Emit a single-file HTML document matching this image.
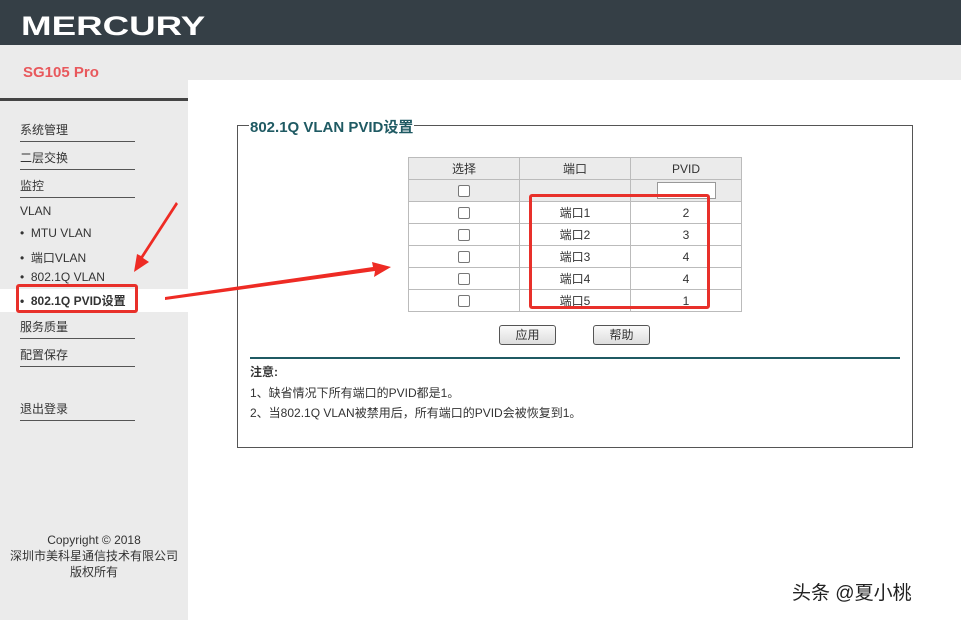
<!DOCTYPE html>
<html><head><meta charset="utf-8"><style>
*{margin:0;padding:0;box-sizing:border-box}
body{width:961px;height:620px;position:relative;overflow:hidden;background:#ebebeb;font-family:"Liberation Sans","Noto Sans CJK SC",sans-serif;font-size:12px;color:#333}
.abs{position:absolute}
#hdr{left:0;top:0;width:961px;height:45px;background:#353f46}
#logo{left:21px;top:11px;color:#fff;font-weight:bold;font-size:27px;letter-spacing:0px;transform:scaleX(1.36);transform-origin:left}
#main{left:188px;top:80px;width:773px;height:540px;background:#fff}
.nav{left:20px;width:115px;border-bottom:1px solid #555;height:22px;line-height:20px;font-size:12px;color:#333}
.sub{left:20px;font-size:12px;color:#333}
table{border-collapse:collapse;position:absolute;left:408px;top:157px}
td{border:1px solid #bbb;width:111px;height:22px;text-align:center;font-size:12px;color:#333}
.g td{background:#ebebeb}
.cb{display:inline-block;width:12px;height:12px;border:1px solid #777;border-radius:2px;background:#fff;vertical-align:middle}
.btn{top:325px;width:57px;height:20px;border:1px solid #555;border-radius:3px;background:linear-gradient(#fafafa,#ddd);text-align:center;line-height:18px;font-size:12px}
</style></head><body>
<div id="hdr" class="abs"></div>
<div id="logo" class="abs">MERCURY</div>
<div class="abs" style="left:23px;top:64px;color:#e8585c;font-weight:bold;font-size:15px">SG105 Pro</div>
<div class="abs" style="left:0;top:98px;width:188px;height:3px;background:#444"></div>
<div id="main" class="abs"></div>
<div class="nav abs" style="top:120px">系统管理</div>
<div class="nav abs" style="top:148px">二层交换</div>
<div class="nav abs" style="top:176px">监控</div>
<div class="sub abs" style="top:204px">VLAN</div>
<div class="sub abs" style="top:226px">•&nbsp; MTU VLAN</div>
<div class="sub abs" style="top:249px">•&nbsp; 端口VLAN</div>
<div class="sub abs" style="top:270px">•&nbsp; 802.1Q VLAN</div>
<div class="abs" style="left:0;top:289px;width:188px;height:23px;background:#fff"></div>
<div class="sub abs" style="top:292px;font-weight:bold">•&nbsp; 802.1Q PVID设置</div>
<div class="nav abs" style="top:317px">服务质量</div>
<div class="nav abs" style="top:345px">配置保存</div>
<div class="nav abs" style="top:399px">退出登录</div>
<div class="abs" style="left:0;top:532px;width:188px;text-align:center;line-height:16px">Copyright © 2018<br>深圳市美科星通信技术有限公司<br>版权所有</div>
<div class="abs" style="left:237px;top:125px;width:676px;height:323px;border:1px solid #555"></div>
<div class="abs" style="left:249px;top:116px;background:#fff;padding:0 1px;color:#1f5a63;font-weight:bold;font-size:15px">802.1Q VLAN PVID设置</div>
<table>
<tr class="g"><td>选择</td><td>端口</td><td>PVID</td></tr>
<tr class="g"><td><span class="cb"></span></td><td></td><td><span style="display:inline-block;width:59px;height:17px;border:1px solid #999;background:#fff;vertical-align:middle"></span></td></tr>
<tr><td><span class="cb"></span></td><td>端口1</td><td>2</td></tr>
<tr><td><span class="cb"></span></td><td>端口2</td><td>3</td></tr>
<tr><td><span class="cb"></span></td><td>端口3</td><td>4</td></tr>
<tr><td><span class="cb"></span></td><td>端口4</td><td>4</td></tr>
<tr><td><span class="cb"></span></td><td>端口5</td><td>1</td></tr>
</table>
<div class="btn abs" style="left:499px">应用</div>
<div class="btn abs" style="left:593px">帮助</div>
<div class="abs" style="left:250px;top:357px;width:650px;height:2px;background:#1f5a63"></div>
<div class="abs" style="left:250px;top:363px;font-weight:bold">注意:</div>
<div class="abs" style="left:250px;top:384px">1、缺省情况下所有端口的PVID都是1。</div>
<div class="abs" style="left:250px;top:404px">2、当802.1Q VLAN被禁用后，所有端口的PVID会被恢复到1。</div>
<div class="abs" style="left:16px;top:284px;width:122px;height:29px;border:3px solid #e8302a;border-radius:3px"></div>
<div class="abs" style="left:529px;top:194px;width:181px;height:115px;border:3px solid #e8302a;border-radius:3px"></div>
<svg class="abs" style="left:0;top:0" width="961" height="620">
<polygon points="176,202 178,204 143,258 149,262 134,272 137,254 141,256" fill="#ee2b24"/>
<polygon points="165,297 165,300 375,271 374,277 391,267 372,262 373,267" fill="#ee2b24"/>
</svg>
<div class="abs" style="left:792px;top:578px;font-size:19px;color:#222">头条 @夏小桃</div>
</body></html>
